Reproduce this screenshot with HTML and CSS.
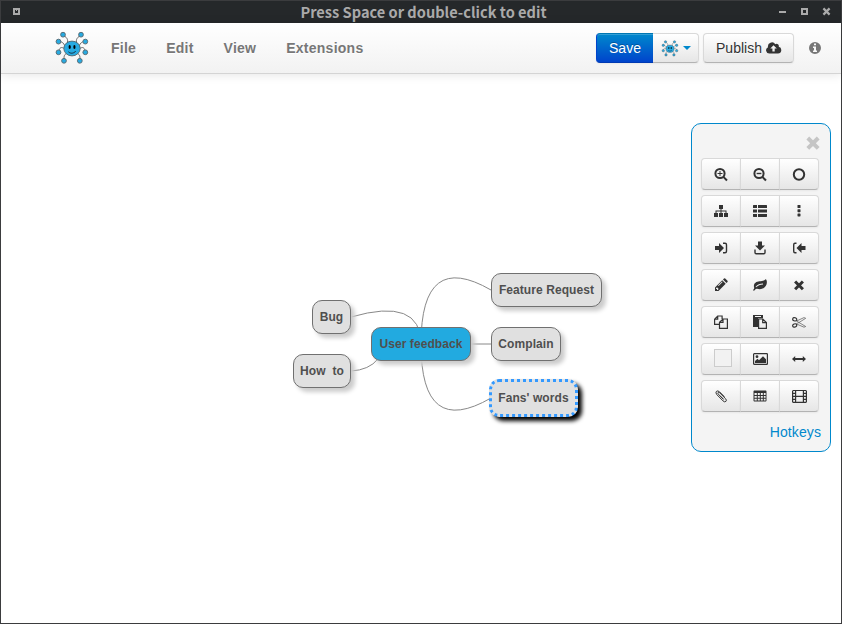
FILE: index.html
```html
<!DOCTYPE html>
<html lang="en">
<head>
<meta charset="utf-8">
<title>Press Space or double-click to edit</title>
<link rel="stylesheet" href="styles.css">
</head>
<body>
<svg class="defs" aria-hidden="true">
  <symbol id="logo" viewBox="0 0 34 34">
    <g fill="none" stroke="#666" stroke-width="1"><path d="M12 13C14 8 11 6 8 4M22 13C20 8 23 6 26 4M10 16C9 11 6 11 4 10M24 16C25 11 28 11 30 10M10 18C6 15 4 17 4 21M24 18C28 15 30 17 30 21M13 22C9 23 9 25 9 29M21 22C25 23 25 25 25 29"/></g>
    <g fill="#27aae1" stroke="#55656d" stroke-width=".9"><circle cx="8" cy="3.700" r="2.400"/><circle cx="26" cy="3.700" r="2.400"/><circle cx="3.500" cy="10.600" r="2.400"/><circle cx="30.300" cy="10.600" r="2.400"/><circle cx="3.500" cy="21.300" r="2.400"/><circle cx="30.300" cy="21.300" r="2.400"/><circle cx="9" cy="29.800" r="2.400"/><circle cx="24.800" cy="29.800" r="2.400"/><ellipse cx="17" cy="17.500" rx="8.200" ry="7.400"/></g>
    <ellipse cx="14.700" cy="16" rx="1.100" ry="2"/><ellipse cx="19.400" cy="16" rx="1.100" ry="2"/><path d="M13.400 20.800C15.500 23 19 22.500 20.800 20" fill="none" stroke="#123" stroke-width=".9"/>
  </symbol>
</svg>
<div class="window">
  <div class="titlebar">
    <svg class="tb-icon" width="7" height="7"><path d="M0 0h7v7H0zM2 2v3h3V2H4v1H3V2z" fill="#aaa" fill-rule="evenodd"/></svg>
    <span class="title">Press Space or double-click to edit</span>
    <div class="controls">
      <svg width="7" height="7"><path d="M0 3h7v2H0z" fill="#aaa"/></svg>
      <svg width="7" height="7"><path d="M0 0h7v7H0zM2 2v3h3V2z" fill="#aaa" fill-rule="evenodd"/></svg>
      <svg width="7" height="7"><path d="M.4 .4l6.200 6.200M6.600 .4L.4 6.600" stroke="#aaa" stroke-width="2.200"/></svg>
    </div>
  </div>
  <header class="navbar">
    <svg class="brand" width="34" height="34"><use href="#logo"/></svg>
    <nav class="menu"><a>File</a><a>Edit</a><a>View</a><a>Extensions</a></nav>
    <div class="group">
      <button class="btn save">Save</button><button class="btn target"><svg width="18" height="17"><use href="#logo"/></svg><i class="caret"></i></button>
    </div>
    <button class="btn publish">Publish
      <svg width="16" height="14" viewBox="0 0 16 14"><path fill="#333" fill-rule="evenodd" d="M3.500 12.500A3.300 3.300 0 0 1 2 6.200A4 4 0 0 1 9.300 3.300A2.200 2.200 0 0 1 12.700 5.800A3.400 3.400 0 0 1 12 12.500zM7.500 4.200L4.300 7.500H6.400V10.500H8.700V7.500H10.800z"/></svg>
    </button>
    <svg class="info" width="12" height="12" viewBox="0 0 12 12"><path fill="#777" fill-rule="evenodd" d="M6 0a6 6 0 1 0 0 12a6 6 0 0 0 0-12zM5 1.500h2v1.800H5zM4 4.600h3v4h1v1.500H4V8.600h1V6H4z"/></svg>
  </header>
  <main class="canvas">
    <svg class="links" width="840" height="549" viewBox="1 74 840 549">
      <path d="M421 344Q421 249.500 491 290M421 344H491M421 344Q421 438.500 491 398M421 344Q421 296.750 351 317M351 371Q369 370 378 359"/>
    </svg>
    <div class="node bug">Bug</div>
    <div class="node howto">How&nbsp; to</div>
    <div class="node root">User feedback</div>
    <div class="node feature">Feature Request</div>
    <div class="node complain">Complain</div>
    <div class="node fans selected">Fans' words</div>
    <aside class="panel">
      <svg class="close" width="14" height="14" viewBox="0 0 14 14"><path d="M1.800 2l10.400 10.400M12.200 2L1.800 12.400" stroke="#c5c5c5" stroke-width="4"/></svg>
      <div class="tools">
        <div class="row">
          <button class="tool"><svg viewBox="0 -.5 14 14"><circle cx="6" cy="6" r="4.600" class="s2"/><path class="s2" d="M9.400 9.400l3.600 3.600"/><path class="s1" d="M3.500 6h5M6 3.500v5"/></svg></button>
          <button class="tool"><svg viewBox="0 -.5 14 14"><circle cx="6" cy="6" r="4.600" class="s2"/><path class="s2" d="M9.400 9.400l3.600 3.600"/><path d="M3.600 5.300h4.800v1.400H3.600z"/></svg></button>
          <button class="tool"><svg viewBox="0 -.5 14 14"><circle cx="7" cy="7" r="5.200" class="s2"/></svg></button>
        </div>
        <div class="row">
          <button class="tool"><svg viewBox="0 0 14 14"><path d="M5 1h4v4H7.500v1.500H12.500V9H14v4H10V9h1.500V7.500h-4V9H9v4H5V9h1.500V7.500h-4V9H4v4H0V9h1.500V6.500h5V5H5z"/></svg></button>
          <button class="tool"><svg viewBox="0 0 14 14"><path d="M.5 1H4v3H0V1.500zM5 1h8.500l.5.500V4H5zM0 5.500h4v3H0zM5 5.500h9v3H5zM0 10h4v3H.5l-.5-.5zM5 10h9v2.500l-.5.500H5z"/></svg></button>
          <button class="tool"><svg viewBox="0 0 14 14"><rect x="5.500" y="1" width="3" height="3" rx=".6"/><rect x="5.500" y="5.200" width="3" height="3" rx=".6"/><rect x="5.500" y="9.400" width="3" height="3" rx=".6"/></svg></button>
        </div>
        <div class="row">
          <button class="tool"><svg viewBox="0 0 14 14"><path d="M1 5h4V2l5 5-5 5V9H1z"/><path class="s15" d="M9 2.200h2q1.500 0 1.500 1.500v6.600q0 1.500-1.500 1.500H9"/></svg></button>
          <button class="tool"><svg viewBox="0 0 14 14"><path d="M5 .5h4v4h3L7 9.500l-5-5h3z"/><path class="s15" d="M2 8.500v3q0 1.200 1.200 1.200h7.600q1.200 0 1.200-1.200v-3"/></svg></button>
          <button class="tool"><svg viewBox="0 0 14 14"><path d="M13.500 5H9.500V2L4.500 7l5 5V9h4z"/><path class="s15" d="M4.500 2.200h-1.500Q1.700 2.200 1.700 3.700v6.600q0 1.500 1.300 1.500h1.500"/></svg></button>
        </div>
        <div class="row">
          <button class="tool"><svg viewBox="0 0 14 14"><path fill-rule="evenodd" d="M1 13V9.500L8.200 2.300l3.500 3.500L4.500 13zM2 10.300V11h1v1h.7l1-1L3 9.300zM4.600 8l4-4-.6-.4-4 4zM9 1.500l1-1q.6-.5 1.200 0l2.300 2.300q.5.600 0 1.200l-1 1z"/></svg></button>
          <button class="tool"><svg viewBox="0 0 14 14"><path fill-rule="evenodd" d="M0 12.200C1 11 1.500 10.500 1 9C.3 5.500 3 3.500 6.500 3.200C9 3 11 3 12.500 1.200C14 1.500 14.200 4.500 13.500 6.500C12 10.500 8 12 4 10.700C2.500 10.500 2 12 1 12.800zM3 9.300C5 7.500 7 6.700 10 6.500V5.500C7 5.500 4.500 6.700 2.600 8.700z"/></svg></button>
          <button class="tool"><svg viewBox="0 -.4 14 14"><path d="M3.100 3.100l7.800 7.800M10.900 3.100l-7.800 7.800" stroke="#333" stroke-width="3"/></svg></button>
        </div>
        <div class="row">
          <button class="tool"><svg viewBox="0 0 14 14"><path class="s12" d="M5.500 9.400H.6V4.200L3.700 1h4.400v3M3.700 1v3.200H.6M9 4h4.400v9.400H5.500V7.300zM9 4v3.300H5.500"/></svg></button>
          <button class="tool"><svg viewBox="0 0 14 14"><path d="M0 0h10v3.300H5V12H0zM2 1v1h6V1z" fill-rule="evenodd"/><path class="s12" d="M5.600 4h4.200l3.600 3.600v5.800H5.600zM9.700 4v3.700h3.700"/></svg></button>
          <button class="tool"><svg viewBox="0 0 14 14" class="thin"><path class="s12" d="M4.600 6L12 2.600l1.700.7L7 7.500 4.600 8.500M4.600 9L12 12.200l1.700-.7L7 7.500 4.600 6"/><ellipse class="s15" cx="2.700" cy="4.300" rx="2.100" ry="1.600" transform="rotate(20 2.700 4.300)"/><ellipse class="s15" cx="2.700" cy="10.500" rx="2.100" ry="1.600" transform="rotate(-20 2.700 10.500)"/></svg></button>
        </div>
        <div class="row">
          <button class="tool"><span class="swatch"></span></button>
          <button class="tool"><svg class="wide" viewBox="0 0 15 14"><rect class="s12" x=".6" y="1.600" width="13.800" height="10.800" rx=".7"/><circle cx="4" cy="4.700" r="1.400"/><path d="M2 11V9l2.500-2.300L6 8.200l4-4 3 3V11z"/></svg></button>
          <button class="tool"><svg viewBox="0 0 14 14"><path d="M0 7l3.200-3v2h7.600V4L14 7l-3.200 3V8H3.200v2z"/></svg></button>
        </div>
        <div class="row">
          <button class="tool"><svg viewBox="0 0 14 14"><path class="s1" d="M9.700 10.500L4.300 5.100q-.9-1-.2-1.600.7-.6 1.600.3l5.800 5.800q1.600 1.700.4 2.800-1.200 1.100-2.900-.5L2.900 5.700Q1.200 3.700 2.400 2.400 3.700 1.200 5.500 2.800l4.900 4.900M5.800 6.600l3.400 3.400"/></svg></button>
          <button class="tool"><svg viewBox="0 0 14 14"><path fill-rule="evenodd" d="M1 1.500h12l.5.700v9.600l-.5.700H1l-.5-.7V2.200zM1.500 4v2h2.300V4zM4.800 4v2h2V4zM7.800 4v2h2V4zM10.800 4v2h1.800V4zM1.500 7v1.700h2.300V7zM4.800 7v1.700h2V7zM7.800 7v1.700h2V7zM10.800 7v1.700h1.800V7zM1.500 9.700v1.800h2.300V9.700zM4.800 9.700v1.800h2V9.700zM7.800 9.700v1.800h2V9.700zM10.800 9.700v1.800h1.800V9.700z"/></svg></button>
          <button class="tool"><svg class="wide" viewBox="0 -.4 15 14"><path fill-rule="evenodd" d="M1 .5h13l1 1v11l-1 1H1l-1-1v-11zM1.200 1.700v1.600H3V1.700zM1.200 4.700v1.600H3V4.700zM1.200 7.700v1.600H3V7.700zM1.200 10.700v1.600H3v-1.600zM4.200 1.700v4.700h6.600V1.700zM4.200 7.600v4.700h6.600V7.600zM12 1.700v1.600h1.800V1.700zM12 4.700v1.600h1.800V4.700zM12 7.700v1.600h1.800V7.700zM12 10.700v1.600h1.800v-1.600z"/></svg></button>
        </div>
      </div>
      <a class="hotkeys">Hotkeys</a>
    </aside>
  </main>
</div>
</body>
</html>
```
FILE: styles.css
```css
* { box-sizing: border-box; }
body { margin: 0; font: 14px/20px "Liberation Sans", Arial, sans-serif; color: #333; }
.defs { position: absolute; width: 0; height: 0; }
.window { width: 842px; height: 624px; border: 1px solid #3b3c3e; background: #fff; display: flex; flex-direction: column; }
.titlebar { height: 22px; flex: none; background: #25282a; display: flex; align-items: center; padding: 0 11px 1px 12px; }
.tb-icon { flex: none; display: block; }
.title { flex: 1; text-align: center; padding-left: 48px; color: #aaa; font: bold 14.6px/20px "Noto Sans CJK SC", "Noto Sans", sans-serif; white-space: nowrap; }
.controls { display: flex; gap: 15px; }
.controls svg { display: block; overflow: visible; }

.navbar { height: 51px; flex: none; display: flex; align-items: center; background: linear-gradient(#fff, #f2f2f2); border-bottom: 1px solid #d4d4d4; box-shadow: 0 1px 10px rgba(0,0,0,.1); padding-left: 54px; position: relative; }
.brand { flex: none; }
.menu { display: flex; gap: 30px; margin-left: 22px; flex: 1; }
.menu a { color: #777; font-weight: bold; font-size: 14px; letter-spacing: .25px; text-shadow: 0 1px 0 #fff; }
.btn { height: 30px; border: 1px solid #ccc; border-color: #d9d9d9 #d9d9d9 #b3b3b3; border-radius: 4px; background: linear-gradient(#fff, #e6e6e6); font: 14px/20px "Liberation Sans", Arial, sans-serif; color: #333; padding: 0 12px; box-shadow: inset 0 1px 0 rgba(255,255,255,.2), 0 1px 2px rgba(0,0,0,.05); display: flex; align-items: center; justify-content: center; text-shadow: 0 1px 1px rgba(255,255,255,.75); }
.group { display: flex; }
.save { width: 57px; color: #fff; background: linear-gradient(#08c, #04c); border-color: #0077b3 #04c #003ab3; border-right: 0; border-radius: 4px 0 0 4px; text-shadow: 0 -1px 0 rgba(0,0,0,.25); }
.target { width: 46px; border-left: 0; border-radius: 0 4px 4px 0; padding: 0; gap: 4px; }
.caret { border: 4px solid transparent; border-top-color: #08c; border-bottom: 0; }
.publish { width: 91px; margin-left: 4px; gap: 4px; padding: 0 0 0 1px; }
.info { margin: 0 20px 0 15px; }

.canvas { flex: 1; position: relative; }
.links { position: absolute; left: 0; top: 0; fill: none; stroke: #888; stroke-width: 1; }
.node { position: absolute; height: 34px; border: 1px solid #707070; border-radius: 10px; background: #e0e0e0; color: #4f4f4f; font-weight: bold; font-size: 12px; letter-spacing: .08px; line-height: 32px; text-align: center; white-space: nowrap; box-shadow: 4px 4px 4px #ccc; }
.bug { left: 311px; top: 226px; width: 39px; }
.howto { left: 292px; top: 280px; width: 58px; }
.root { left: 370px; top: 253px; width: 100px; background: #22aae0; }
.feature { left: 490px; top: 199px; width: 111px; }
.complain { left: 490px; top: 253px; width: 70px; }
.fans { left: 488px; top: 305px; width: 89px; }
.selected { height: 38px; border: 3px dotted #39f; box-shadow: 4px 4px 4px #000; }

.panel { position: absolute; left: 690px; top: 49px; width: 140px; height: 329px; border: 1px solid #0088cc; border-radius: 10px; background: #f4f4f4; padding: 12px 9px 9px; display: flex; flex-direction: column; }
.close { align-self: flex-end; margin-right: 1px; flex: none; }
.tools { display: flex; flex-direction: column; gap: 5px; margin-top: 8px; }
.row { display: flex; }
.tool { width: 40px; height: 32px; margin-right: -1px; padding: 0; border: 1px solid #ccc; border-color: #d9d9d9 #d9d9d9 #b3b3b3; background: linear-gradient(#fff, #e6e6e6); box-shadow: 0 1px 2px rgba(0,0,0,.05); display: flex; align-items: center; justify-content: center; }
.tool:first-child { border-radius: 4px 0 0 4px; }
.tool:last-child { border-radius: 0 4px 4px 0; }
.tool svg { width: 14px; height: 14px; fill: #333; overflow: visible; }
.tool svg.wide { width: 15px; }
.s1, .s12, .s15, .s2 { fill: none; stroke: #333; stroke-width: 1; }
.s12 { stroke-width: 1.2; }
.s15 { stroke-width: 1.4; }
.s2 { stroke-width: 2; }
.thin .s12 { stroke-width: .7; stroke: #555; }
.thin .s15 { stroke-width: 1.1; }
.swatch { width: 18px; height: 18px; border: 1px solid #ccc; background: #f2f2f2; margin: -2px 0 0 3px; }
.hotkeys { align-self: flex-end; color: #08c; letter-spacing: .1px; margin-top: 10px; }
```
